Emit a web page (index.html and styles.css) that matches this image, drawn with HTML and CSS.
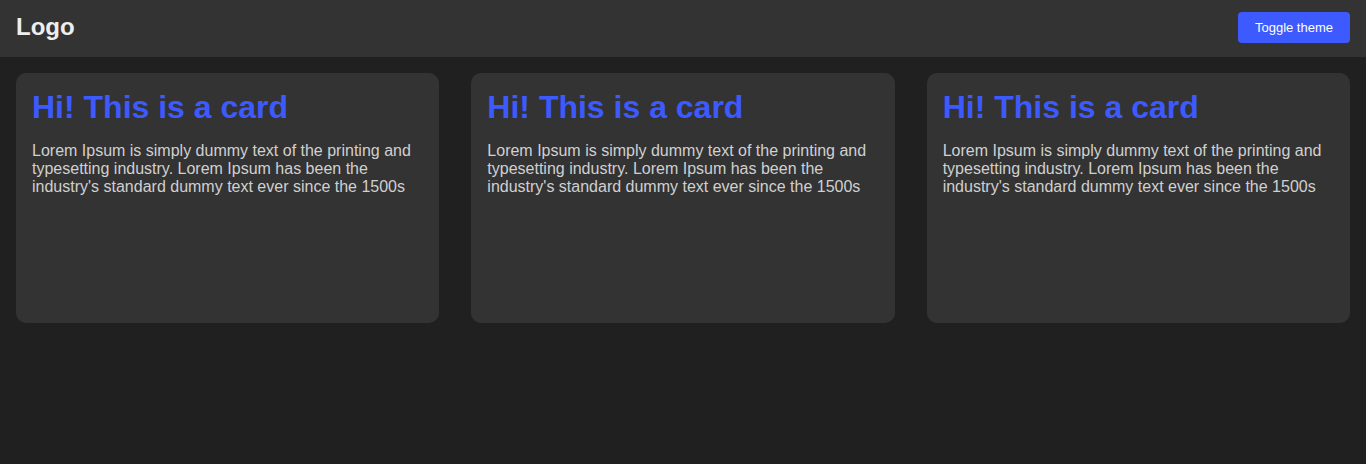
FILE: index.html
```html
<!DOCTYPE html>
<html lang="en">
<head>
<meta charset="utf-8">
<title>Cards</title>
<link rel="stylesheet" href="styles.css">
</head>
<body>
<header class="header">
  <div class="logo">Logo</div>
  <button class="toggle">Toggle theme</button>
</header>
<main class="cards">
  <section class="card">
    <h1 class="card-title">Hi! This is a card</h1>
    <p class="card-text">Lorem Ipsum is simply dummy text of the printing and typesetting industry. Lorem Ipsum has been the industry's standard dummy text ever since the 1500s</p>
  </section>
  <section class="card">
    <h1 class="card-title">Hi! This is a card</h1>
    <p class="card-text">Lorem Ipsum is simply dummy text of the printing and typesetting industry. Lorem Ipsum has been the industry's standard dummy text ever since the 1500s</p>
  </section>
  <section class="card">
    <h1 class="card-title">Hi! This is a card</h1>
    <p class="card-text">Lorem Ipsum is simply dummy text of the printing and typesetting industry. Lorem Ipsum has been the industry's standard dummy text ever since the 1500s</p>
  </section>
</main>
</body>
</html>
```
FILE: styles.css
```css
* { box-sizing: border-box; }
html, body {
  margin: 0;
  background: #202020;
  font-family: "Liberation Sans", Arial, sans-serif;
  height: 100%;
}
.header {
  height: 57px;
  background: #333333;
  display: flex;
  justify-content: space-between;
  align-items: flex-start;
  padding: 12px 16px 0;
}
.logo {
  font-size: 24px;
  font-weight: bold;
  line-height: 28px;
  margin-top: 1px;
  color: #eeeeee;
}
.toggle {
  height: 31px;
  padding: 0 17px;
  border: none;
  border-radius: 4px;
  background: #3d5afe;
  color: #ffffff;
  font-family: "Liberation Sans", Arial, sans-serif;
  font-size: 13px;
  cursor: pointer;
}
.cards {
  display: grid;
  grid-template-columns: repeat(3, 1fr);
  gap: 32px;
  padding: 16px;
}
.card {
  height: 250px;
  background: #333333;
  border-radius: 10px;
  padding: 16px;
}
.card-title {
  margin: 0;
  font-size: 32px;
  font-weight: bold;
  color: #3d5afe;
}
.card-text {
  margin: 16px 0 0;
  font-size: 16px;
  color: #d0d0d0;
}
```
